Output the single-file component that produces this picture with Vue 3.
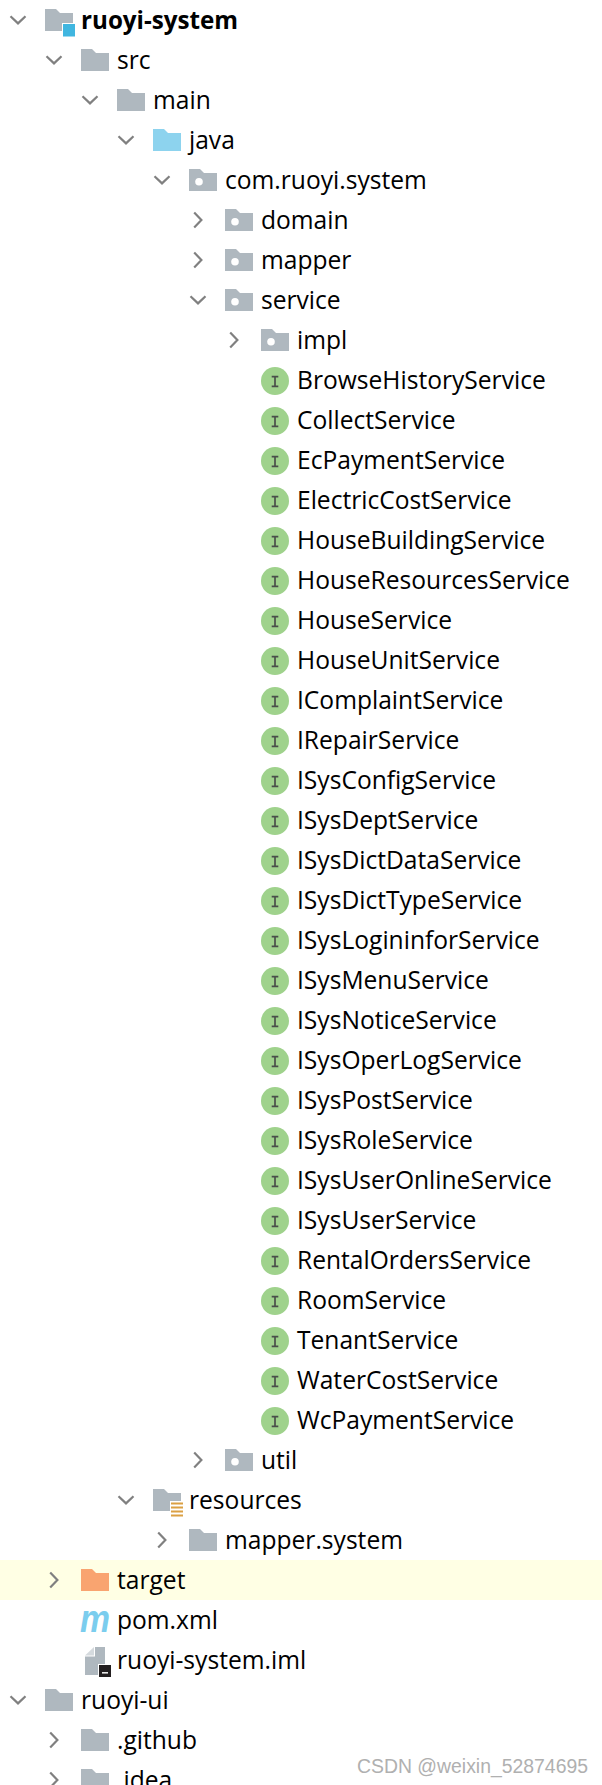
<script setup>
const services = [
  'BrowseHistoryService', 'CollectService', 'EcPaymentService', 'ElectricCostService',
  'HouseBuildingService', 'HouseResourcesService', 'HouseService', 'HouseUnitService',
  'IComplaintService', 'IRepairService', 'ISysConfigService', 'ISysDeptService',
  'ISysDictDataService', 'ISysDictTypeService', 'ISysLogininforService', 'ISysMenuService',
  'ISysNoticeService', 'ISysOperLogService', 'ISysPostService', 'ISysRoleService',
  'ISysUserOnlineService', 'ISysUserService', 'RentalOrdersService', 'RoomService',
  'TenantService', 'WaterCostService', 'WcPaymentService',
]

// arrow: open / closed / none
const rows = [
  { name: 'ruoyi-system', depth: 0, arrow: 'open', icon: 'module', bold: true },
  { name: 'src', depth: 1, arrow: 'open', icon: 'folder' },
  { name: 'main', depth: 2, arrow: 'open', icon: 'folder' },
  { name: 'java', depth: 3, arrow: 'open', icon: 'source' },
  { name: 'com.ruoyi.system', depth: 4, arrow: 'open', icon: 'package' },
  { name: 'domain', depth: 5, arrow: 'closed', icon: 'package' },
  { name: 'mapper', depth: 5, arrow: 'closed', icon: 'package' },
  { name: 'service', depth: 5, arrow: 'open', icon: 'package' },
  { name: 'impl', depth: 6, arrow: 'closed', icon: 'package' },
  ...services.map((name) => ({ name, depth: 6, arrow: 'none', icon: 'interface' })),
  { name: 'util', depth: 5, arrow: 'closed', icon: 'package' },
  { name: 'resources', depth: 3, arrow: 'open', icon: 'resources' },
  { name: 'mapper.system', depth: 4, arrow: 'closed', icon: 'folder' },
  { name: 'target', depth: 1, arrow: 'closed', icon: 'target', hl: true },
  { name: 'pom.xml', depth: 1, arrow: 'none', icon: 'maven' },
  { name: 'ruoyi-system.iml', depth: 1, arrow: 'none', icon: 'iml' },
  { name: 'ruoyi-ui', depth: 0, arrow: 'open', icon: 'folder' },
  { name: '.github', depth: 1, arrow: 'closed', icon: 'folder' },
  { name: '.idea', depth: 1, arrow: 'closed', icon: 'folder' },
]

const FOLDER = 'M0 0H11L15 4H28V22H0Z'
</script>

<template>
  <div class="tree">
    <div
      v-for="row in rows"
      :key="row.name + row.depth"
      class="row"
      :class="{ hl: row.hl }"
      :style="{ paddingLeft: 9 + row.depth * 36 + 'px' }"
    >
      <span class="arrow">
        <svg v-if="row.arrow === 'open'" width="18" height="10" viewBox="0 0 18 10">
          <path d="M1.5 1.2L9 8.4L16.5 1.2" fill="none" stroke="#808080" stroke-width="2.2" />
        </svg>
        <svg v-else-if="row.arrow === 'closed'" width="10" height="18" viewBox="0 0 10 18">
          <path d="M1.2 1.5L8.4 9L1.2 16.5" fill="none" stroke="#808080" stroke-width="2.2" />
        </svg>
      </span>
      <svg class="icon" width="32" height="30" viewBox="0 0 32 30">
        <template v-if="row.icon === 'interface'">
          <circle cx="14" cy="15" r="14" fill="#9fd28c" />
          <path d="M10.7 10.6H17.3M14 10.6V20.4M10.7 20.4H17.3" fill="none" stroke="#4a4f4a" stroke-width="1.7" />
        </template>
        <template v-else-if="row.icon === 'maven'">
          <text x="-1" y="26" class="maven" textLength="30" lengthAdjust="spacingAndGlyphs">m</text>
        </template>
        <template v-else-if="row.icon === 'iml'">
          <path d="M4 9.5L13 1V9.5Z" fill="#d5dade" />
          <path d="M14 1H24V18H17V29H4V10.5H14Z" fill="#afb8bf" />
          <rect x="18" y="19" width="12" height="12" fill="#231f20" />
          <rect x="21" y="26" width="6" height="1.6" fill="#e8e8e8" />
        </template>
        <template v-else>
          <path :d="FOLDER" transform="translate(0 3)"
            :fill="row.icon === 'source' ? '#8dd3ee' : row.icon === 'target' ? '#f9a470' : '#afb8bf'" />
          <circle v-if="row.icon === 'package'" cx="10" cy="15.7" r="3.8" fill="#fff" />
          <template v-if="row.icon === 'module'">
            <rect x="17" y="17" width="14" height="15" fill="#fff" />
            <rect x="18" y="18" width="12" height="12.5" fill="#40b6e0" />
          </template>
          <template v-if="row.icon === 'resources'">
            <rect x="17" y="15" width="15" height="17" fill="#fff" />
            <path d="M18 17.5H30M18 21.5H30M18 25.5H30M18 29.5H30" stroke="#dba043" stroke-width="2" />
          </template>
        </template>
      </svg>
      <span class="label" :class="{ bold: row.bold }">{{ row.name }}</span>
    </div>
    <div class="mark">CSDN @weixin_52874695</div>
  </div>
</template>

<style>
html, body {
  margin: 0;
  background: #fff;
}
</style>

<style scoped>
.tree {
  position: relative;
  width: 602px;
  height: 1785px;
  overflow: hidden;
  background: #fff;
  font-family: "Open Sans", "Noto Sans", sans-serif;
  font-size: 24.6px;
  color: #000;
}

.row {
  display: flex;
  align-items: center;
  height: 40px;
  box-sizing: border-box;
}

.row.hl {
  background: #ffffe4;
}

.arrow {
  display: flex;
  flex: none;
  align-items: center;
  justify-content: center;
  width: 18px;
  margin-right: 18px;
}

.icon {
  flex: none;
  margin-right: 4px;
  margin-top: 2px;
  overflow: visible;
}

.label {
  white-space: nowrap;
  line-height: 40px;
}

.bold {
  font-size: 24.2px;
  font-weight: 700;
}

.maven {
  font-family: "Liberation Sans", sans-serif;
  font-size: 39px;
  font-weight: 700;
  font-style: italic;
  fill: #7bcdee;
}

.mark {
  position: absolute;
  right: 14px;
  bottom: 7px;
  font-family: "Liberation Sans", sans-serif;
  font-size: 19.4px;
  color: #b0b0b0;
}
</style>
